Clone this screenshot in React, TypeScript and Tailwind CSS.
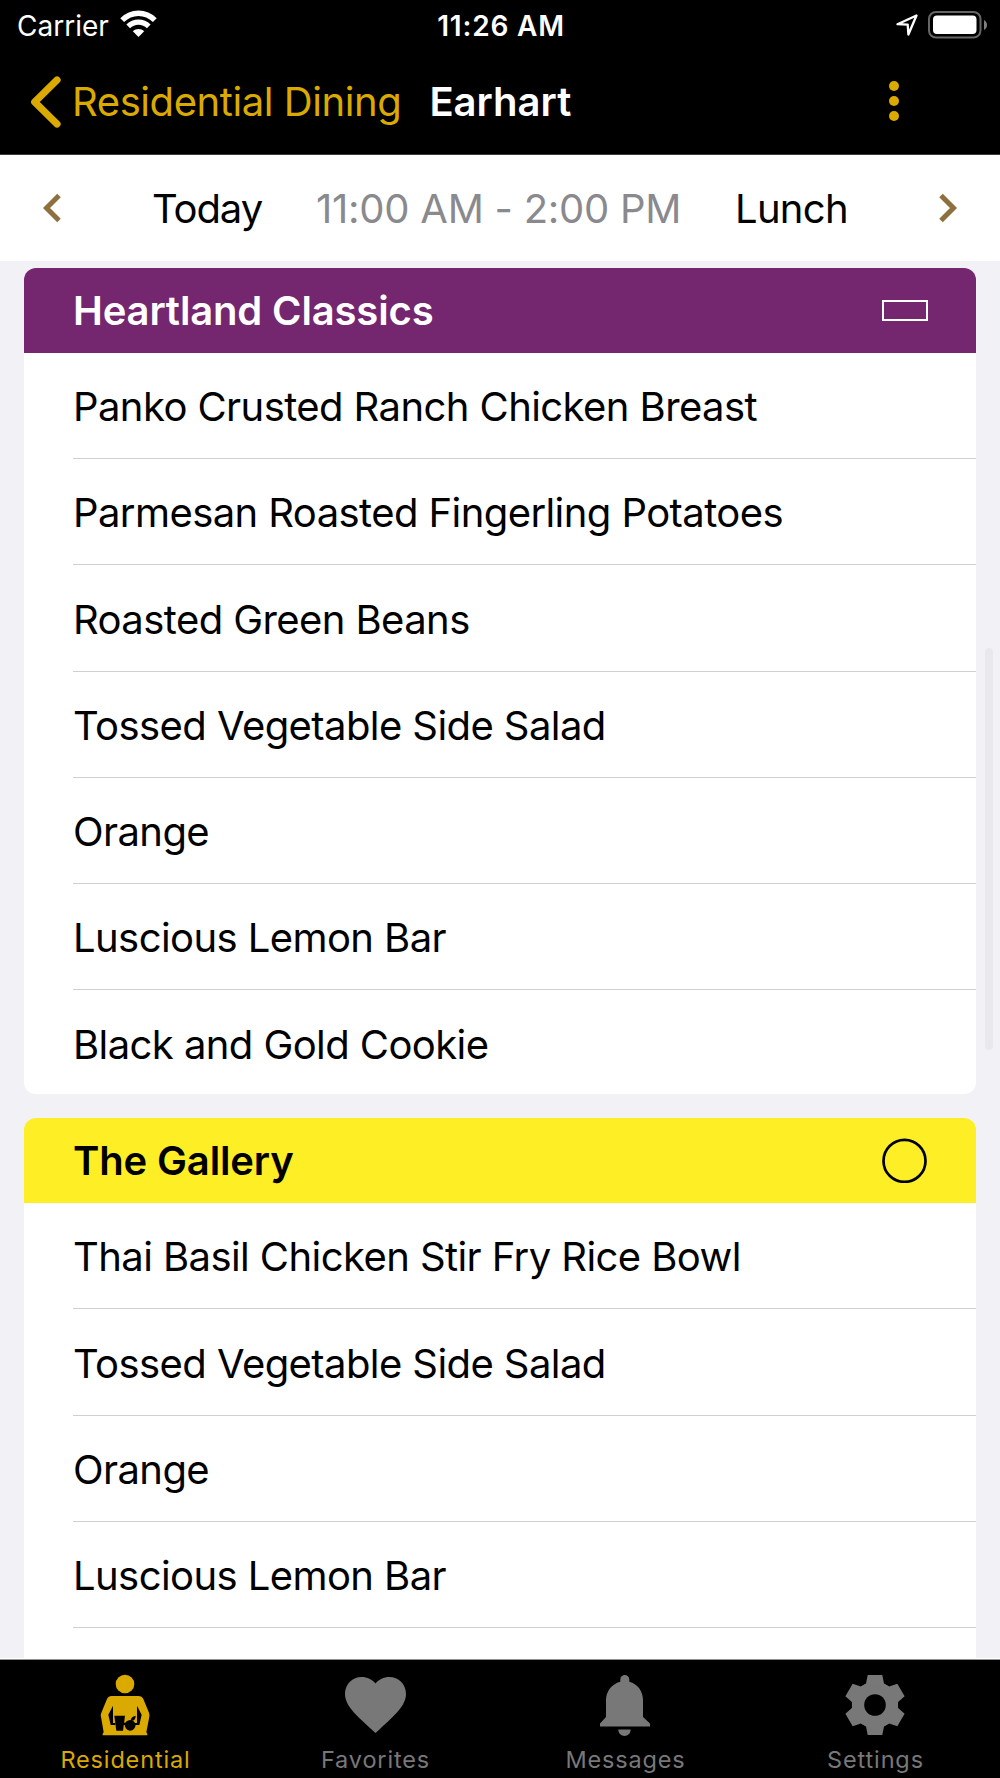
import type { ReactNode } from "react";

interface Station {
  name: string;
  headerClass: string;
  badge: ReactNode;
  items: string[];
  // the list continues below the fold
  continues?: boolean;
}

const stations: Station[] = [
  {
    name: "Heartland Classics",
    headerClass: "bg-[#74266f] text-white",
    badge: <div className="w-[46px] h-[21px] -mr-px border-2 border-white" />,
    items: [
      "Panko Crusted Ranch Chicken Breast",
      "Parmesan Roasted Fingerling Potatoes",
      "Roasted Green Beans",
      "Tossed Vegetable Side Salad",
      "Orange",
      "Luscious Lemon Bar",
      "Black and Gold Cookie",
    ],
  },
  {
    name: "The Gallery",
    headerClass: "bg-[#fdee25] text-black",
    badge: (
      <svg className="size-[45px]" viewBox="0 0 45 45" fill="none">
        <circle cx="22.5" cy="22.9" r="21" stroke="black" strokeWidth="2.7" />
      </svg>
    ),
    items: [
      "Thai Basil Chicken Stir Fry Rice Bowl",
      "Tossed Vegetable Side Salad",
      "Orange",
      "Luscious Lemon Bar",
    ],
    continues: true,
  },
];

const WifiIcon = () => (
  <svg className="w-[37px] h-[27px]" viewBox="0 0 37 27" fill="none">
    <path d="M2.2 10.2C11.5 1 25.5 1 34.8 10.2" stroke="white" strokeWidth="5.4" />
    <path d="M8.2 16.3C14 10.6 23 10.6 28.8 16.3" stroke="white" strokeWidth="5.2" />
    <path d="M18.5 27L12.8 21.3C16 18.2 21 18.2 24.2 21.3Z" fill="white" />
  </svg>
);

const LocationIcon = () => (
  <svg className="w-[22px] h-[22px]" viewBox="0 0 22 22" fill="none">
    <path d="M20.5 1.5L1.5 10.2L11.7 10.7L12.4 20.5Z" stroke="white" strokeWidth="2.3" strokeLinejoin="round" />
  </svg>
);

const BatteryIcon = () => (
  <svg className="w-[60px] h-[28px]" viewBox="0 0 60 28" fill="none">
    <rect x="1" y="1" width="51.5" height="25.5" rx="7" stroke="#666" strokeWidth="2" />
    <rect x="5" y="4.5" width="43.5" height="18.5" rx="4" fill="white" />
    <path d="M56 9V19C60 17 60 11 56 9Z" fill="#808080" />
  </svg>
);

const StatusBar = () => (
  <div className="flex items-center h-[51px] pl-[17px] pr-3 text-[28px] text-white">
    <div className="flex flex-1 items-center">
      <span>Carrier</span>
      <span className="ml-[11px] -mt-1">
        <WifiIcon />
      </span>
    </div>
    <span className="mr-[3px] font-semibold tracking-[0.8px]">11:26 AM</span>
    <div className="flex flex-1 items-center justify-end gap-[10px] pb-0.5">
      <LocationIcon />
      <BatteryIcon />
    </div>
  </div>
);

const NavBar = () => (
  <div className="flex items-center h-[104px] border-b border-[#3d3d3d] pb-0.5 pl-[30px] pr-[101px] text-[40px]">
    <svg className="w-[32px] h-[52px]" viewBox="0 0 32 52" fill="none">
      <path d="M27 4L4.7 26L27 48" stroke="#daaa00" strokeWidth="7.2" strokeLinecap="round" strokeLinejoin="round" />
    </svg>
    <span className="ml-[10px] whitespace-nowrap tracking-[-0.42px] text-[#daaa00]">Residential Dining</span>
    <span className="ml-[28px] font-semibold text-white">Earhart</span>
    <div className="ml-auto mb-0.5 flex flex-col gap-[5px]">
      <div className="size-[10px] rounded-full bg-[#daaa00]" />
      <div className="size-[10px] rounded-full bg-[#daaa00]" />
      <div className="size-[10px] rounded-full bg-[#daaa00]" />
    </div>
  </div>
);

const Chevron = ({ className = "" }: { className?: string }) => (
  <svg className={`w-[18px] h-[30px] shrink-0 ${className}`} viewBox="0 0 18 30" fill="none">
    <path d="M16 2.5L3.5 15L16 27.5" stroke="#8e6f3e" strokeWidth="5" />
  </svg>
);

const MealPicker = () => (
  <div className="flex items-center h-[106px] bg-white px-[43px] text-[40px] whitespace-nowrap">
    <Chevron />
    <div className="flex flex-1 pt-0.5 pl-[91px]">
      <span className="w-[164px] tracking-[-1.1px]">Today</span>
      <span className="w-[419px] tracking-[-0.25px] text-[#8a8a8e]">11:00 AM - 2:00 PM</span>
      <span className="tracking-[-0.7px]">Lunch</span>
    </div>
    <Chevron className="rotate-180" />
  </div>
);

const StationCard = ({ station }: { station: Station }) => (
  <section
    className={`shrink-0 overflow-hidden bg-white ${station.continues ? "grow rounded-t-xl" : "rounded-xl"}`}
  >
    <div className={`flex items-center justify-between h-[84.7px] px-[49px] font-semibold ${station.headerClass}`}>
      <span className="pt-px tracking-[-0.15px]">{station.name}</span>
      {station.badge}
    </div>
    <ul className="pl-[49px]">
      {station.items.map((item) => (
        <li
          key={item}
          className={`flex items-center h-[106.25px] border-b border-[#cfcfd1] pt-[3px] tracking-[-0.58px] ${station.continues ? "" : "last:border-b-0 last:h-[104px] last:pt-[5px]"}`}
        >
          {item}
        </li>
      ))}
    </ul>
  </section>
);

// Diner holding a tray with a cup and an apple
const DiningIcon = () => (
  <svg className="w-[50px] h-[62px]" viewBox="301 102 150 186">
    <circle cx="376" cy="132" r="28" fill="#daaa00" />
    <path
      d="M336 168H416Q427 168 431 177L448 218Q450 224 449 230L440 277L443 281V286H309V281L312 277L304 230Q302 224 305 218L322 177Q326 168 336 168Z"
      fill="#daaa00"
    />
    <path d="M340 197V249H347V255H333L326 224Z" />
    <path d="M412 197V249H405V255H419L426 224Z" />
    <path d="M344 227H376L370 272H350Z" />
    <path d="M371 248H380V255H371Z" />
    <circle cx="391.500" cy="256" r="16" />
    <path d="M393 242Q393 230 408 227Q408 240 396 243Z" />
  </svg>
);

const HeartIcon = () => (
  <svg className="w-[61px] h-[56px]" viewBox="2 3 20 18.35" fill="#787878">
    <path d="M12 21.35l-1.45-1.32C5.4 15.36 2 12.28 2 8.5 2 5.42 4.42 3 7.5 3c1.74 0 3.41.81 4.5 2.09C13.09 3.81 14.76 3 16.5 3 19.58 3 22 5.42 22 8.5c0 3.78-3.4 6.86-8.55 11.54L12 21.35z" />
  </svg>
);

const BellIcon = () => (
  <svg className="w-[50px] h-[61px]" viewBox="0 0 50 61" fill="#787878">
    <path d="M20.3 6.7V4.7C20.3-1.5 29.3-1.5 29.3 4.7V6.7C38 9 43 16.5 43 25V42L50 48.5V51.5H0V48.5L6 42V25C6 16.5 11.5 9 20.3 6.7Z" />
    <path d="M18.3 54.5H30.7C30.5 63 18.5 63 18.3 54.5Z" />
  </svg>
);

const GearIcon = () => (
  <svg className="w-[60px] h-[60px]" viewBox="-30 -30 60 60" fill="#787878">
    {[0, 60, 120, 180, 240, 300].map((angle) => (
      <path key={angle} d="M-7.3 -30H7.3L9 -21.5L14 -18.4L10 0H-10L-14 -18.4L-9 -21.5Z" transform={`rotate(${angle})`} />
    ))}
    <circle r="18" />
    <circle r="10.8" fill="black" />
  </svg>
);

const tabs = [
  { label: "Residential", icon: <DiningIcon />, active: true },
  { label: "Favorites", icon: <HeartIcon />, active: false },
  { label: "Messages", icon: <BellIcon />, active: false },
  { label: "Settings", icon: <GearIcon />, active: false },
];

const TabBar = () => (
  <nav className="grid grid-cols-4 h-[119px] shrink-0 border-t border-[#8f968f] bg-black">
    {tabs.map((tab) => (
      <div key={tab.label} className="flex flex-col items-center">
        <div className="flex items-center justify-center h-[62px] mt-[14px]">{tab.icon}</div>
        <span
          className={`mt-[9px] pl-px text-[23.5px] leading-[30px] tracking-[0.85px] ${tab.active ? "text-[#daaa00]" : "text-[#787878]"}`}
        >
          {tab.label}
        </span>
      </div>
    ))}
  </nav>
);

export default function App() {
  return (
    <div className="flex flex-col w-[1000px] h-[1778px] overflow-hidden bg-[#f2f1f6] font-['Inter',sans-serif] text-black">
      <header className="shrink-0 bg-black">
        <StatusBar />
        <NavBar />
      </header>
      <MealPicker />
      <main className="relative flex flex-1 min-h-0 flex-col gap-6 overflow-hidden border-b border-white px-6 pt-[7.3px] text-[40px]">
        {stations.map((station) => (
          <StationCard key={station.name} station={station} />
        ))}
        {/* Scroll indicator */}
        <div className="absolute top-[387px] right-[7px] w-2 h-[402px] rounded-full bg-[#e9e8ed]" />
      </main>
      <TabBar />
    </div>
  );
}
